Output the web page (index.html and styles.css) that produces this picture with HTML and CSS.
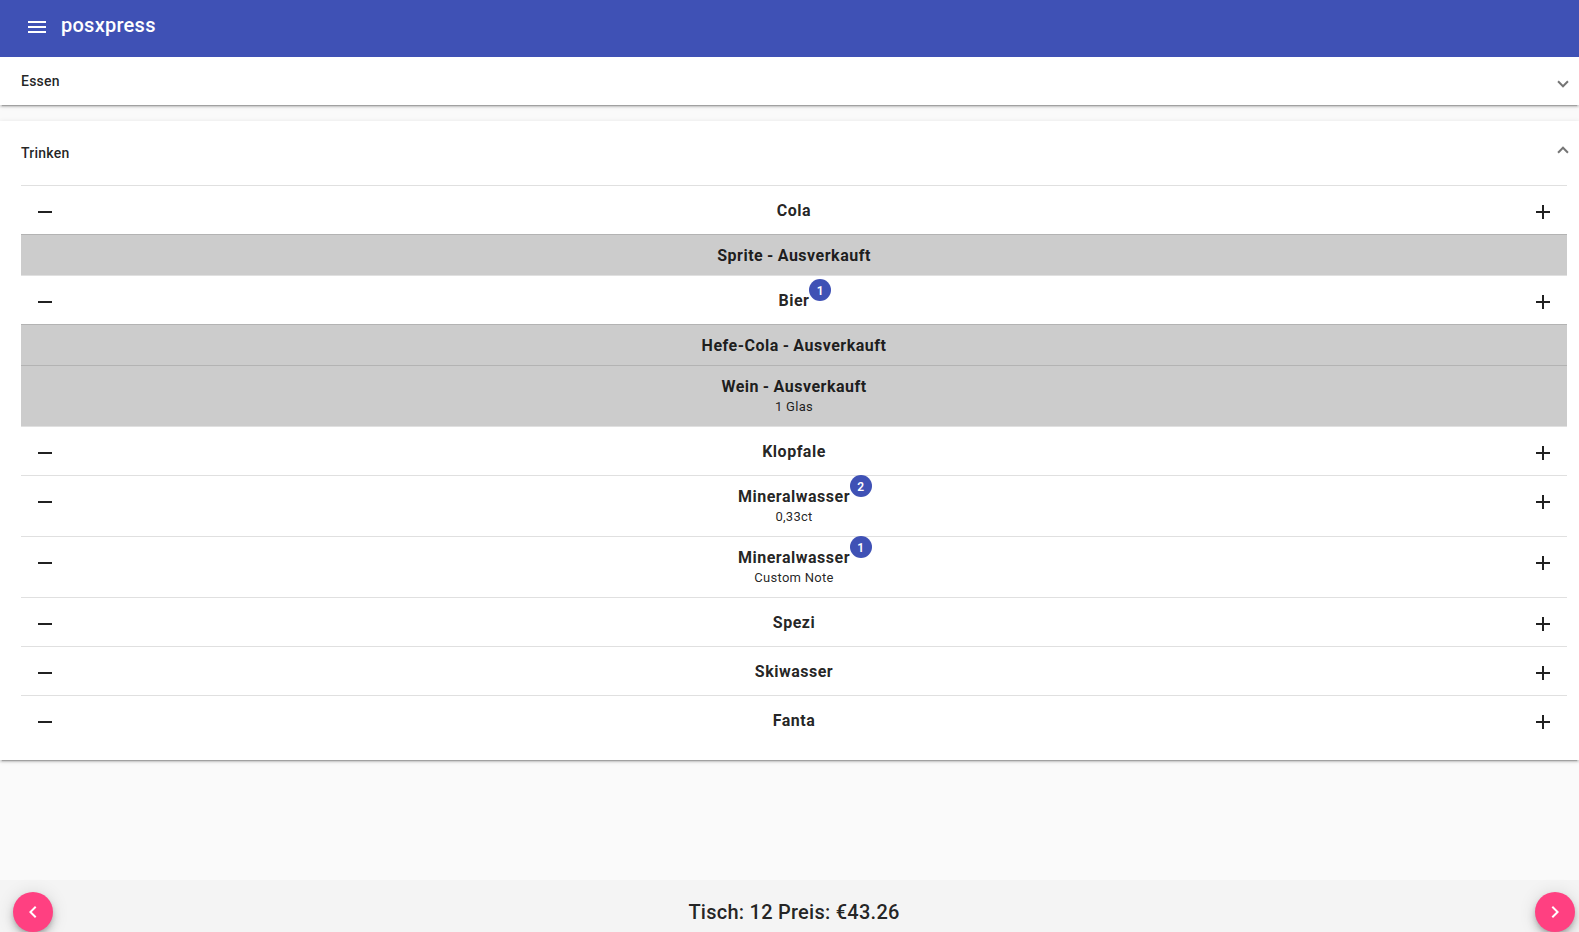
FILE: index.html
```
<!DOCTYPE html>
<html lang="de">
<head>
<meta charset="utf-8">
<title>posxpress</title>
<link rel="stylesheet" href="styles.css">
</head>
<body>
<svg class="defs" aria-hidden="true">
  <symbol id="minus" viewBox="0 0 24 24"><path d="M19 13H5v-2h14z"/></symbol>
  <symbol id="plus" viewBox="0 0 24 24"><path d="M19 13h-6v6h-2v-6H5v-2h6V5h2v6h6z"/></symbol>
</svg>
<header class="toolbar">
  <svg class="icon menu" viewBox="0 0 24 24"><path d="M3 18h18v-2H3v2zm0-5h18v-2H3v2zm0-7v2h18V6H3z"/></svg>
  <h1 class="title">posxpress</h1>
</header>
<main class="content">
  <section class="panel">
    <div class="panel-header"><span>Essen</span><span class="indicator"></span></div>
  </section>
  <section class="panel expanded">
    <div class="panel-header"><span>Trinken</span><span class="indicator"></span></div>
    <ul class="items">
      <li class="item"><svg class="icon"><use href="#minus"/></svg><div class="label"><span class="name">Cola</span></div><svg class="icon"><use href="#plus"/></svg></li>
      <li class="item sold-out"><div class="label"><span class="name">Sprite - Ausverkauft</span></div></li>
      <li class="item"><svg class="icon"><use href="#minus"/></svg><div class="label"><span class="name">Bier<span class="badge">1</span></span></div><svg class="icon"><use href="#plus"/></svg></li>
      <li class="item sold-out"><div class="label"><span class="name">Hefe-Cola - Ausverkauft</span></div></li>
      <li class="item sold-out"><div class="label"><span class="name">Wein - Ausverkauft</span><span class="note">1 Glas</span></div></li>
      <li class="item"><svg class="icon"><use href="#minus"/></svg><div class="label"><span class="name">Klopfale</span></div><svg class="icon"><use href="#plus"/></svg></li>
      <li class="item"><svg class="icon"><use href="#minus"/></svg><div class="label"><span class="name">Mineralwasser<span class="badge">2</span></span><span class="note">0,33ct</span></div><svg class="icon"><use href="#plus"/></svg></li>
      <li class="item"><svg class="icon"><use href="#minus"/></svg><div class="label"><span class="name">Mineralwasser<span class="badge">1</span></span><span class="note">Custom Note</span></div><svg class="icon"><use href="#plus"/></svg></li>
      <li class="item"><svg class="icon"><use href="#minus"/></svg><div class="label"><span class="name">Spezi</span></div><svg class="icon"><use href="#plus"/></svg></li>
      <li class="item"><svg class="icon"><use href="#minus"/></svg><div class="label"><span class="name">Skiwasser</span></div><svg class="icon"><use href="#plus"/></svg></li>
      <li class="item"><svg class="icon"><use href="#minus"/></svg><div class="label"><span class="name">Fanta</span></div><svg class="icon"><use href="#plus"/></svg></li>
    </ul>
  </section>
</main>
<footer class="footer">
  <button class="fab" aria-label="Zurück"><svg class="icon" viewBox="0 0 24 24"><path d="M15.41 7.41L14 6l-6 6 6 6 1.41-1.41L10.83 12z"/></svg></button>
  <span class="summary">Tisch: 12 Preis: €43.26</span>
  <button class="fab" aria-label="Weiter"><svg class="icon" viewBox="0 0 24 24"><path d="M10 6L8.59 7.41 13.17 12l-4.58 4.59L10 18l6-6z"/></svg></button>
</footer>
</body>
</html>
```
FILE: styles.css
```
* { box-sizing: border-box; }
body {
  margin: 0;
  height: 100vh;
  overflow: hidden;
  display: flex;
  flex-direction: column;
  background: #fafafa;
  color: rgba(0, 0, 0, .87);
  font-family: Roboto, sans-serif;
}
.defs { display: none; }
.icon { display: block; width: 24px; height: 24px; flex: none; fill: currentColor; }
.toolbar {
  position: relative;
  z-index: 1;
  flex: none;
  display: flex;
  align-items: flex-start;
  gap: 12px;
  height: 57px;
  padding: 15px 25px 0;
  background: #3f51b5;
  color: #fff;
}
.title { margin: -6px 0 0; font-size: 20px; line-height: 32px; font-weight: 500; letter-spacing: .26px; }
.content { flex: 1; display: flex; flex-direction: column; gap: 16px; }
.panel {
  background: #fff;
  box-shadow: 0 3px 1px -2px rgba(0,0,0,.2), 0 2px 2px 0 rgba(0,0,0,.14), 0 1px 5px 0 rgba(0,0,0,.12);
}
.panel-header {
  display: flex;
  align-items: center;
  justify-content: space-between;
  height: 48px;
  padding: 0 12px 0 21px;
  font-size: 14px;
  font-weight: 500;
  letter-spacing: .25px;
}
.expanded .panel-header { height: 64px; }
.indicator {
  width: 8px;
  height: 8px;
  border: solid rgba(0, 0, 0, .54);
  border-width: 0 2px 2px 0;
  transform: translateY(1px) rotate(45deg);
}
.expanded .indicator { transform: translateY(-1px) rotate(225deg); }
.items { list-style: none; margin: 0; padding: 0 12px 16px 21px; }
.item {
  display: flex;
  align-items: flex-start;
  border-top: 1px solid rgba(0, 0, 0, .12);
  padding: 0 12px;
}
.item .icon { margin-top: 14px; }
.label {
  flex: 1;
  display: flex;
  flex-direction: column;
  align-items: center;
  align-self: center;
  padding: 11px 0 9px;
}
.item:not(.sold-out) { min-height: 49px; }
.sold-out { background: #ccc; }
.name { position: relative; font-size: 16px; line-height: 20px; font-weight: 700; letter-spacing: .5px; word-spacing: -.6px; }
.note { font-size: 13px; line-height: 20px; letter-spacing: .27px; }
.badge {
  position: absolute;
  left: 100%;
  top: -12px;
  width: 22px;
  height: 22px;
  border-radius: 50%;
  background: #3f51b5;
  color: #fff;
  font-size: 12px;
  line-height: 24px;
  font-weight: 600;
  text-align: center;
}
.footer {
  flex: none;
  display: flex;
  align-items: flex-start;
  justify-content: space-between;
  height: 52px;
  padding: 12px 4px 0 13px;
  background: #f4f4f4;
}
.summary { font-size: 20px; line-height: 40px; font-weight: 500; letter-spacing: .25px; }
.fab {
  display: grid;
  place-items: center;
  width: 40px;
  height: 40px;
  padding: 0;
  border: 0;
  border-radius: 50%;
  background: #ff4081;
  color: #fff;
  box-shadow: 0 3px 5px -1px rgba(0,0,0,.2), 0 6px 10px 0 rgba(0,0,0,.14), 0 1px 18px 0 rgba(0,0,0,.12);
}
```
